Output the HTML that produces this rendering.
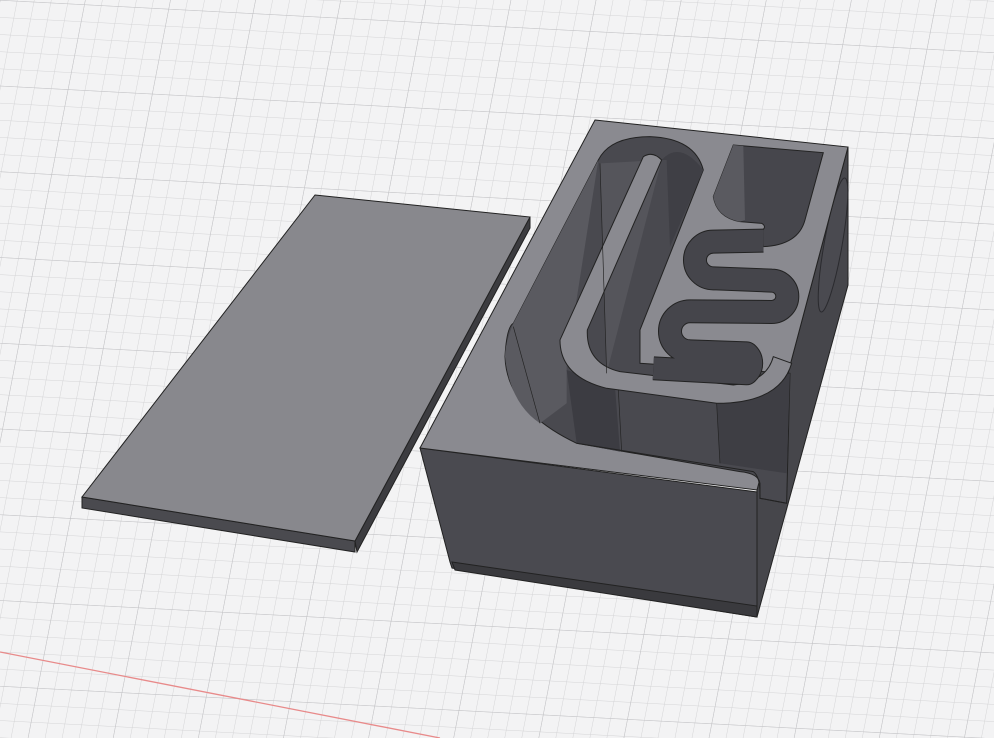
<!DOCTYPE html>
<html><head><meta charset="utf-8"><style>
html,body{margin:0;padding:0;width:994px;height:738px;overflow:hidden;background:#f2f2f3}
svg{display:block}
</style></head><body>
<svg width="994" height="738" viewBox="0 0 994 738" xmlns="http://www.w3.org/2000/svg">
<defs>
<pattern id="g" width="17" height="17" patternUnits="userSpaceOnUse" patternTransform="skewX(-8) rotate(3)">
<path d="M0 0H17M0 0V17" stroke="#d4d4d6" stroke-width="1" fill="none"/>
</pattern>
<pattern id="g2" width="85" height="85" patternUnits="userSpaceOnUse" patternTransform="skewX(-8) rotate(3)">
<path d="M0 0H85M0 0V85" stroke="#c2c2c5" stroke-width="1" fill="none"/>
</pattern>
</defs>
<rect width="994" height="738" fill="#f3f3f4"/>
<rect width="994" height="738" fill="url(#g)"/>
<rect width="994" height="738" fill="url(#g2)"/>
<line x1="0" y1="652" x2="440" y2="738" stroke="#e88a8a" stroke-width="1.3"/>

<!-- lid -->
<polygon points="82,497 355,541 355,552 82,508" fill="#4a4a4f" stroke="#222" stroke-width="1"/>
<polygon points="355,541 530,217 530,228 357,552" fill="#3c3c40" stroke="#222" stroke-width="1"/>
<polygon points="315,195 530,217 355,541 82,497" fill="#88888d" stroke="#222" stroke-width="1"/>

<!-- box -->
<polygon points="757,490 848,147 848,285 757,617" fill="#46464b" stroke="#222" stroke-width="1"/>
<ellipse cx="833" cy="245" rx="9" ry="68" fill="#4a4a50" stroke="#2a2a2e" stroke-width="1" transform="rotate(10 833 245)"/>
<polygon points="420,448 757,492 757,617 452,568 450,562" fill="#4a4a50" stroke="#222" stroke-width="1"/>
<polygon points="452,562 757,606 757,617 455,570" fill="#3a3a3e" stroke="#222" stroke-width="1"/>
<polygon points="595,120 848,147 757,490 420,448" fill="#8a8a90" stroke="#222" stroke-width="1"/>

<g transform="translate(500,110) scale(0.3333)" stroke="#222" stroke-width="3">
  <path d="M295,150 Q330,80 450,80 Q585,85 610,180 L420,660 L420,760 L870,790 L860,1180 L780,1165 L780,1120 Q775,1090 720,1085 L230,1000 Q20,900 15,740 Q20,650 40,640 Z" fill="#49494f"/>
  <path d="M295,150 L40,640 Q15,700 15,740 Q30,880 120,940 L200,880 L200,760 Z" fill="#5a5a60" stroke="none"/>
  <path d="M300,160 L320,790 L485,150 Z" fill="#55555b" stroke="none"/>
  <path d="M485,150 Q540,90 610,180 L510,410 L500,150 Z" fill="#3f3f45" stroke="none"/>
  <path d="M200,780 L230,1000 L360,1025 L345,830 Z" fill="#3c3c42" stroke="none"/>
  <path d="M650,880 L660,1060 L860,1090 L870,790 Z" fill="#3e3e44" stroke="none"/>
  <path d="M430,140 Q458,122 485,150 L262,660 Q258,760 360,785 L700,825 Q800,815 820,740 L875,760 Q840,880 650,880 L320,835 Q180,800 180,690 Z" fill="#8a8a90"/>
  <path d="M300,160 L320,790 M355,840 L365,1025 M650,880 L660,1060 M40,650 L120,940" fill="none" stroke-width="2"/>
  <path d="M700,105 L970,128 L915,330 Q895,405 790,410 L785,362 Q802,350 785,340 L720,335 Q650,322 640,260 Z" fill="#46464c"/>
  <path d="M700,105 L730,108 L735,330 L720,335 Q650,322 640,260 Z" fill="#5a5a60" stroke="none"/>
  <path d="M790,392 L640,395 A55,55 0 0 0 640,505 L815,512 A47,47 0 0 1 815,606 L570,604 A60,60 0 0 0 570,724 L740,730 A40,40 0 0 1 740,790 L460,775" fill="none" stroke="#222" stroke-width="72" stroke-linejoin="round"/>
  <path d="M790,392 L640,395 A55,55 0 0 0 640,505 L815,512 A47,47 0 0 1 815,606 L570,604 A60,60 0 0 0 570,724 L740,730 A40,40 0 0 1 740,790 L460,775" fill="none" stroke="#45454b" stroke-width="66" stroke-linejoin="round"/>
  <path d="M230,1000 L760,1085 Q782,1100 780,1165 L860,1180" fill="none" stroke="#222" stroke-width="3"/>
</g>
</svg>
</body></html>
